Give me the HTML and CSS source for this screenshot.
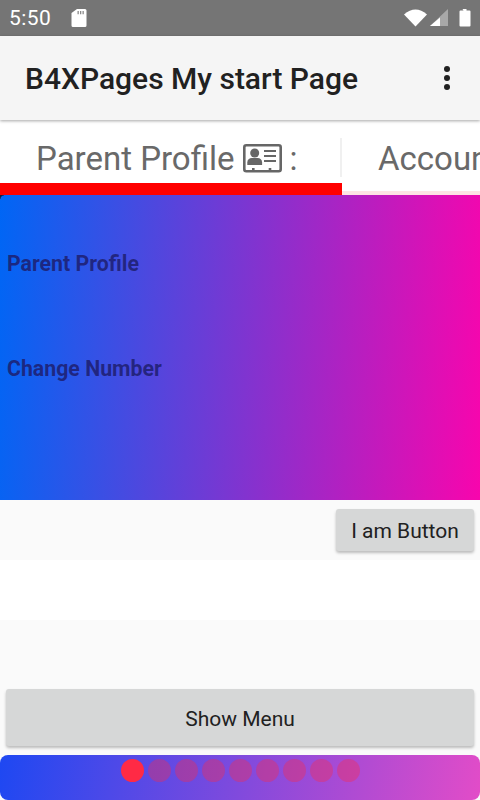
FILE: index.html
```html
<!DOCTYPE html>
<html lang="en">
<head>
    <meta charset="UTF-8">
    <meta name="viewport" content="width=device-width, initial-scale=1.0">
    <title>B4XPages My start Page</title>
    <link rel="stylesheet" href="styles.css">
</head>
<body>

    <div class="status-bar">
        <div class="status-left">
            <span class="status-time">5:50</span>
            <svg class="sd-icon" width="16" height="20" viewBox="0 0 16 20">
                <path fill="#fff" d="M6 1h8a1.500 1.500 0 0 1 1.500 1.500v15a1.500 1.500 0 0 1-1.500 1.500h-12a1.500 1.500 0 0 1-1.500-1.500v-12.500z"/>
                <path fill="#8a8a8a" d="M6.500 3h1.300v3.200h-1.300zM9 3h1.300v3.200h-1.300zM11.500 3h1.300v3.200h-1.300z"/>
            </svg>
        </div>
        <div class="status-right">
            <svg width="24" height="20" viewBox="0 0 24 20">
                <path fill="#fff" d="M0 6.500q11.500-10 23 0l-11.500 12z"/>
            </svg>
            <svg class="signal-icon" width="18" height="20" viewBox="0 0 18 20">
                <path fill="#a8a8a8" d="M18 1v17h-18z"/>
                <path fill="#fff" d="M10 9.500v8.500h-10z"/>
            </svg>
            <svg class="battery-icon" width="12" height="20" viewBox="0 0 12 20">
                <path fill="#fff" d="M3.500 1h4v1.500h3a1 1 0 0 1 1 1v14a1 1 0 0 1-1 1h-9a1 1 0 0 1-1-1v-14a1 1 0 0 1 1-1h3z"/>
            </svg>
        </div>
    </div>

    <header class="app-bar">
        <div class="app-title">B4XPages My start Page</div>
        <div class="overflow-menu">
            <span></span><span></span><span></span>
        </div>
    </header>

    <!-- Tabs -->
    <div class="tabs">
        <div class="tab tab-active">
            <span>Parent Profile</span>
            <svg class="tab-icon" width="39" height="29" viewBox="0 0 39 29">
                <rect x="1.300" y="1.300" width="36.400" height="25.900" rx="2" fill="none" stroke="#666" stroke-width="2.600"/>
                <circle cx="11.700" cy="9" r="4.500" fill="#666"/>
                <path fill="#666" d="M4.300 21v-2.500c0-3 2-4.500 4.500-4.500h5.800c2.500 0 4.500 1.500 4.500 4.500v2.500z"/>
                <path fill="#666" d="M21 6h12v2h-12zM21 11h12v2h-12zM21 16h12v2h-12z"/>
                <path fill="#666" d="M9 24h2.600v3h-2.600zM25.700 24h2.600v3h-2.600z"/>
            </svg>
            <span class="tab-colon">:</span>
        </div>
        <div class="tab tab-next">Account</div>
    </div>

    <div class="panel">
        <div class="panel-label label-first">Parent Profile</div>
        <div class="panel-label label-second">Change Number</div>
    </div>

    <div class="row-button">
        <button class="btn btn-small">I am Button</button>
    </div>

    <div class="row-empty"></div>

    <div class="row-menu">
        <button class="btn btn-wide">Show Menu</button>
    </div>

    <div class="dots-bar">
        <span class="dot dot-active"></span>
        <span class="dot"></span>
        <span class="dot"></span>
        <span class="dot"></span>
        <span class="dot"></span>
        <span class="dot"></span>
        <span class="dot"></span>
        <span class="dot"></span>
        <span class="dot"></span>
    </div>

</body>
</html>
```

FILE: styles.css
```css
/* General */
body {
    margin: 0;
    width: 480px;
    height: 800px;
    overflow: hidden;
    background-color: #fafafa;
    font-family: 'Roboto', sans-serif;
    display: flex;
    flex-direction: column;
}

/* Status bar */
.status-bar {
    height: 36px;
    flex-shrink: 0;
    background-color: #757575;
    display: flex;
    justify-content: space-between;
    align-items: center;
    padding: 0 9px 0 9px;
    color: #fff;
}

.status-left,
.status-right {
    display: flex;
    align-items: center;
}

.status-time {
    font-size: 21px;
    letter-spacing: 0.4px;
}

.sd-icon {
    margin-left: 20px;
}

.signal-icon {
    margin-left: 2px;
}

.battery-icon {
    margin-left: 11px;
}

/* App bar */
.app-bar {
    height: 84px;
    flex-shrink: 0;
    box-sizing: border-box;
    background-color: #f5f5f5;
    display: flex;
    justify-content: space-between;
    align-items: center;
    padding: 0 30px 0 25px;
    box-shadow: 0 1px 3px rgba(0, 0, 0, 0.35);
    position: relative;
}

.app-title {
    font-size: 30px;
    font-weight: 500;
    color: #212121;
}

.overflow-menu {
    display: flex;
    flex-direction: column;
    gap: 3px;
}

.overflow-menu span {
    width: 6px;
    height: 6px;
    border-radius: 50%;
    background-color: #212121;
}

/* Tabs */
.tabs {
    height: 75px;
    flex-shrink: 0;
    background-color: #fff;
    display: flex;
    overflow: hidden;
}

.tab {
    flex-shrink: 0;
    height: 75px;
    box-sizing: border-box;
    display: flex;
    align-items: center;
    font-size: 33px;
    color: #696969;
    white-space: nowrap;
}

.tab-active {
    width: 342px;
    padding: 13px 0 0 36px;
    border-bottom: 12px solid #f00;
    position: relative;
}

.tab-active::after {
    content: "";
    position: absolute;
    right: 0;
    top: 18px;
    width: 2px;
    height: 39px;
    background-color: #f0f0f0;
}

.tab-icon {
    margin-left: 9px;
}

.tab-colon {
    margin-left: 7px;
}

.tab-next {
    flex-grow: 1;
    padding: 5px 0 0 36px;
    border-bottom: 4px solid #fde4e4;
}

/* Gradient panel */
.panel {
    height: 305px;
    flex-shrink: 0;
    background-image: linear-gradient(93deg, #0066f5 0%, #f805ad 100%);
    box-sizing: border-box;
    padding: 57px 7px 0;
    position: relative;
}

/* little dark notch in the top left corner */
.panel::before {
    content: "";
    position: absolute;
    left: 0;
    top: 0;
    width: 4px;
    height: 4px;
    background-image: radial-gradient(circle at 100% 100%, transparent 3px, #1a1a3a 4px);
}

.panel-label {
    font-size: 21.3px;
    font-weight: 700;
    line-height: 24px;
    color: rgba(30, 30, 110, 0.85);
}

.label-second {
    margin-top: 81px;
}

/* Buttons */
.btn {
    display: block;
    border: none;
    border-radius: 3px;
    background-color: #d6d7d7;
    color: #212121;
    font-family: 'Roboto', sans-serif;
    box-shadow: 0 2px 3px rgba(0, 0, 0, 0.25);
    padding: 2px 0 0;
}

.row-button {
    height: 60px;
    flex-shrink: 0;
    box-sizing: border-box;
    display: flex;
    justify-content: flex-end;
    padding: 9px 6px 0 0;
}

.btn-small {
    width: 138px;
    height: 42px;
    font-size: 21px;
}

.row-empty {
    height: 60px;
    flex-shrink: 0;
    background-color: #fff;
}

.row-menu {
    height: 135px;
    flex-shrink: 0;
    box-sizing: border-box;
    padding: 69px 6px 0;
}

.btn-wide {
    width: 468px;
    height: 57px;
    font-size: 21px;
}

/* Page dots */
.dots-bar {
    height: 45px;
    flex-shrink: 0;
    box-sizing: border-box;
    border-radius: 8px;
    background-image: linear-gradient(100deg, #1e48f2 0%, #e24cc8 100%);
    display: flex;
    gap: 4px;
    padding: 4px 0 0 121px;
}

.dot {
    width: 23px;
    height: 23px;
    border-radius: 50%;
    background-color: rgba(255, 40, 70, 0.35);
}

.dot-active {
    background-color: #ff2a45;
}
```
